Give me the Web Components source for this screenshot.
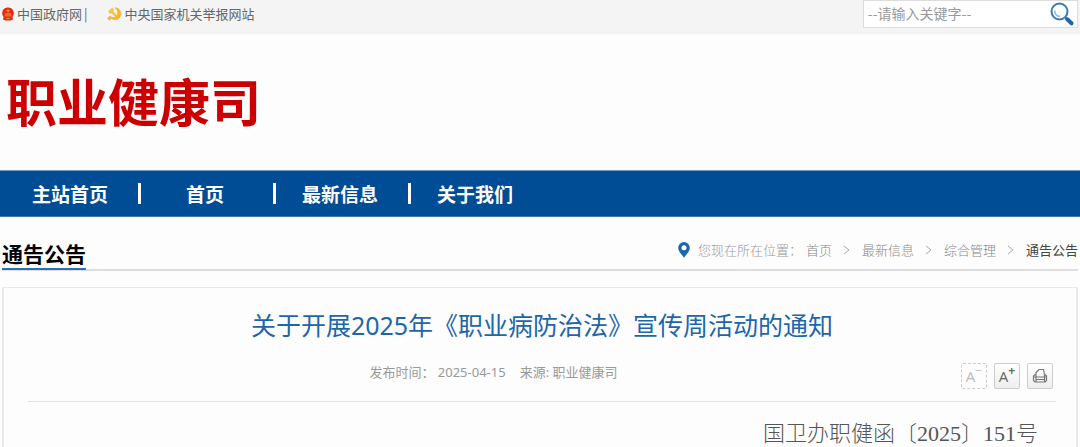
<!DOCTYPE html>
<html lang="zh-CN">
<head>
<meta charset="utf-8">
<meta name="viewport" content="width=device-width, initial-scale=1">
<title>职业健康司</title>
<style>
  body {
    margin: 0;
    background: #fdfdfd;
    color: #666;
    font: 13px/20px "Noto Sans CJK SC", sans-serif;
  }
</style>
</head>
<body>
  <top-bar></top-bar>
  <site-brand>职业健康司</site-brand>
  <main-nav>
    <nav-item>主站首页</nav-item>
    <nav-item>首页</nav-item>
    <nav-item>最新信息</nav-item>
    <nav-item>关于我们</nav-item>
  </main-nav>
  <section-head>
    <span slot="title">通告公告</span>
    <crumb-item>首页</crumb-item>
    <crumb-item>最新信息</crumb-item>
    <crumb-item>综合管理</crumb-item>
    <crumb-item current>通告公告</crumb-item>
  </section-head>
  <notice-article>
    <span slot="title">关于开展2025年《职业病防治法》宣传周活动的通知</span>
    <span slot="date">2025-04-15</span>
    <span slot="source">职业健康司</span>
    <span slot="number">国卫办职健函〔2025〕151号</span>
  </notice-article>

<script>
// barra superior: enlaces y buscador
class TopBar extends HTMLElement {
  connectedCallback() {
    this.attachShadow({ mode: 'open' }).innerHTML = `
      <style>
        :host {
          display: flex;
          justify-content: space-between;
          align-items: flex-start;
          height: 34px;
          padding: 0 2px;
          box-sizing: border-box;
          background: #f4f4f4;
        }
        .links { display: flex; align-items: center; height: 28px; }
        a { display: flex; align-items: center; gap: 3px; color: #666; text-decoration: none; }
        .bar { margin: 0 19px 0 2px; }
        form {
          display: flex;
          align-items: center;
          width: 20%;
          height: 28px;
          box-sizing: border-box;
          border: 1px solid #ddd;
          background: #fff;
        }
        input {
          flex: 1;
          min-width: 0;
          border: 0;
          outline: 0;
          padding: 0 4px 2px;
          background: none;
          font: 14px/20px "Noto Sans CJK SC", sans-serif;
        }
        input::placeholder { color: #999; opacity: 1; }
        button { display: flex; border: 0; padding: 0 3px 0 0; background: none; cursor: pointer; }
      </style>
      <div class="links">
        <a href="#">
          <svg width="12" height="14" viewBox="0 0 12 14">
            <path d="M6 .5C9 .5 11.800 2.600 11.800 6c0 2-.8 3-1.400 4l.6 2.400-2.600 1H3.600L1 12.400 1.600 10C.9 9 .2 8 .2 6 .2 2.600 3 .5 6 .5z" fill="#e02a1a"/>
            <path d="M6 1.800l.6 1.200 1.300.1-1 .9.300 1.200L6 4.600l-1.200.6.3-1.200-1-.9 1.300-.1zM3 6.500h6v1H3zM2.500 8.500h7v.8h-7zM4.500 11h3v1h-3z" fill="#f7a733"/>
          </svg>
          中国政府网
        </a>
        <span class="bar">|</span>
        <a href="#">
          <svg width="15" height="14" viewBox="0 0 15 14">
            <path d="M1 4.500L5 .8l2.500 2-1.300 1.400 6.300 6.200-1.800 1.800-6.500-6.200L3 7z" fill="#f9c443"/>
            <path d="M8 .8c4 .2 5.800 3 5.800 6 0 3.500-2.400 5.900-5.600 5.900-1.600 0-3-.5-4-1.400L2.500 13.200.6 11.500l2.400-2.500c1 1.100 2.300 1.600 3.800 1.600 2.400 0 4-1.600 4-4C10.800 4 10 2 8 .8z" fill="#f9b826" stroke="#e8a02a" stroke-width=".5"/>
          </svg>
          <span>中央国家机关举报网站</span>
        </a>
      </div>
      <form>
        <input type="text" placeholder="--请输入关键字--" aria-label="请输入关键字">
        <button type="button" aria-label="搜索">
          <svg width="24" height="24" viewBox="0 0 24 24" fill="none">
            <path d="M15.500 15.500l2 2" stroke="#2d6aae" stroke-width="2"/>
            <path d="M17.300 17.300l4.200 4" stroke="#1f64ad" stroke-width="4" stroke-linecap="round"/>
            <circle cx="9.500" cy="9.500" r="8" stroke="#3c78b5" stroke-width="2"/>
            <path d="M4.800 8.500c-.4 3.500 2 6 5.200 5.700" stroke="#8db3da" stroke-width="1.500"/>
          </svg>
        </button>
      </form>`;
  }
}

class SiteBrand extends HTMLElement {
  connectedCallback() {
    this.attachShadow({ mode: 'open' }).innerHTML = `
      <style>
        :host { display: block; padding: 31px 6px 35px; }
        h1 {
          margin: 0;
          color: #c00;
          font-size: 51px;
          font-weight: 700;
          line-height: 70px;
        }
      </style>
      <h1><slot></slot></h1>`;
  }
}

// menu principal
class MainNav extends HTMLElement {
  connectedCallback() {
    this.attachShadow({ mode: 'open' }).innerHTML = `
      <style>
        :host { display: block; background: #004d95; border-top: 1px solid #6f9bc4; border-bottom: 1px solid #3f78b0; }
        nav { display: flex; height: 45px; padding-left: 6px; }
      </style>
      <nav><slot></slot></nav>`;
  }
}

class NavItem extends HTMLElement {
  connectedCallback() {
    this.attachShadow({ mode: 'open' }).innerHTML = `
      <style>
        :host { display: flex; align-items: center; width: 135px; }
        a {
          flex: 1;
          padding-right: 4px;
          text-align: center;
          color: #fff;
          font-size: 19px;
          font-weight: bold;
          line-height: 28px;
          text-decoration: none;
        }
        i { width: 3px; height: 21px; background: #fff; }
        :host(:last-child) i { visibility: hidden; }
      </style>
      <a href="#"><slot></slot></a><i></i>`;
  }
}

// titulo de la seccion y ruta de navegacion
class SectionHead extends HTMLElement {
  connectedCallback() {
    this.attachShadow({ mode: 'open' }).innerHTML = `
      <style>
        :host {
          display: flex;
          justify-content: space-between;
          align-items: flex-start;
          margin: 22px 2px 0;
          height: 30px;
          border-bottom: 2px solid #ddd;
        }
        h2 {
          margin: 0;
          color: #000;
          font-size: 21px;
          line-height: 29px;
          border-bottom: 2px solid #2a70b8;
        }
        nav { display: flex; align-items: center; height: 22px; color: #999; font-weight: 300; }
        svg { margin-right: 8px; }
        .label { margin-right: 4px; }
      </style>
      <h2><slot name="title"></slot></h2>
      <nav>
        <svg width="12" height="16" viewBox="0 0 12 16">
          <path d="M6 0a5.800 5.800 0 0 1 5.800 5.800C11.800 9.500 8.500 12 6 15.800 3.500 12 .2 9.500.2 5.800A5.800 5.800 0 0 1 6 0zm0 3.200a2.500 2.500 0 1 0 0 5 2.500 2.500 0 0 0 0-5z" fill="#1d66ad" fill-rule="evenodd"/>
        </svg>
        <span class="label">您现在所在位置：</span>
        <slot></slot>
      </nav>`;
  }
}

class CrumbItem extends HTMLElement {
  connectedCallback() {
    this.attachShadow({ mode: 'open' }).innerHTML = `
      <style>
        :host { display: flex; align-items: center; font-weight: 300; }
        a { color: #888; text-decoration: none; }
        svg { margin: 0 12px 0 11px; }
        :host([current]) { font-weight: 400; }
        :host([current]) a { color: #444; }
        :host([current]) svg { display: none; }
      </style>
      <a href="#"><slot></slot></a>
      <svg width="7" height="10" viewBox="0 0 7 10"><path d="M1 1l5 4-5 4" fill="none" stroke="#aaa"/></svg>`;
  }
}

class NoticeArticle extends HTMLElement {
  connectedCallback() {
    this.attachShadow({ mode: 'open' }).innerHTML = `
      <style>
        :host {
          display: block;
          margin: 16px 2px 0;
          padding: 19px 20px 0 24px;
          border: 1px solid #e8e8e8;
          border-width: 1px 2px 0;
        }
        h1 {
          margin: 0;
          text-align: center;
          color: #1e66ab;
          font-size: 25px;
          font-weight: normal;
          font-family: "Noto Sans", "Noto Sans CJK SC", sans-serif;
          line-height: 36px;
        }
        .info {
          display: grid;
          grid-template-columns: 95px 1fr 95px;
          padding: 16px 0 12px;
          border-bottom: 1px solid #e4e4e4;
        }
        .meta {
          grid-column: 2;
          display: flex;
          justify-content: center;
          gap: 14px;
          padding: 3px 97px 0 0;
          color: #999;
          font-family: "Noto Sans", "Noto Sans CJK SC", sans-serif;
        }
        .tools { display: flex; gap: 7px; padding-top: 4px; }
        button {
          width: 26px;
          height: 26px;
          padding: 0;
          display: flex;
          align-items: center;
          justify-content: center;
          border: 1px solid #ccc;
          border-radius: 2px;
          background: linear-gradient(#fff, #eee);
          color: #666;
          font: 15px/22px "Open Sans", sans-serif;
        }
        button.off { border-style: dashed; background: none; color: #bbb; }
        sup { font-size: 12px; font-weight: bold; line-height: 14px; align-self: flex-start; }
        .off sup { font-weight: normal; }
        .number {
          margin: 0;
          padding: 19px 18px 0 0;
          text-align: right;
          color: #555;
          font: 300 22px/26px "Liberation Serif", "Noto Sans CJK SC", serif;
        }
      </style>
      <h1><slot name="title"></slot></h1>
      <div class="info">
        <div class="meta">
          <span>发布时间： <slot name="date"></slot></span>
          <span>来源: <slot name="source"></slot></span>
        </div>
        <div class="tools">
          <button type="button" class="off" aria-label="缩小字号">A<sup>−</sup></button>
          <button type="button" aria-label="放大字号">A<sup>+</sup></button>
          <button type="button" aria-label="打印">
            <svg width="16" height="16" viewBox="0 0 16 16" fill="none" stroke="#777" stroke-width="1.200">
              <path d="M4 6.500V4.500L7 1.500h4.500L12.500 6.500"/>
              <path d="M4 6.500H3L1.500 8v4.500L3 14h10l1.500-1.500V8L13 6.500h-.5"/>
              <path d="M4 6.500V14M12.500 6.500V14M1.500 9h13M4 11.500h8.500"/>
            </svg>
          </button>
        </div>
      </div>
      <p class="number"><slot name="number"></slot></p>`;
  }
}

customElements.define('top-bar', TopBar);
customElements.define('site-brand', SiteBrand);
customElements.define('main-nav', MainNav);
customElements.define('nav-item', NavItem);
customElements.define('section-head', SectionHead);
customElements.define('crumb-item', CrumbItem);
customElements.define('notice-article', NoticeArticle);
</script>
</body>
</html>
